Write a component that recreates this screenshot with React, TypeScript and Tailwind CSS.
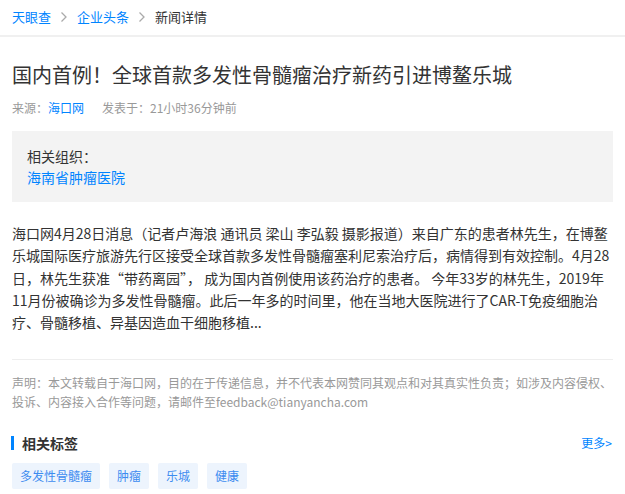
import React from "react";

const Chevron = () => (
  <svg width="8" height="12" viewBox="0 0 8 12" className="mx-[9px]" fill="none">
    <polyline points="1.5,1.5 6,6 1.5,10.5" stroke="#aaaaaa" strokeWidth="1.3" />
  </svg>
);

export default function App() {
  const font = { fontFamily: '"Noto Sans CJK SC", "Liberation Sans", sans-serif' };
  return (
    <div className="w-[625px] h-[494px] bg-white overflow-hidden text-[#333]" style={font}>
      <div className="h-[37px] border-b-2 border-[#f0f0f0] flex items-center px-3 text-[13px] leading-[18px] pb-[1px]">
        <span className="text-[#0084ff]">天眼查</span>
        <Chevron />
        <span className="text-[#0084ff]">企业头条</span>
        <Chevron />
        <span className="text-[#333]">新闻详情</span>
      </div>
      <div className="px-3">
        <h1 className="mt-[24px] text-[20px] leading-[28px] text-[#333]">
          国内首例！全球首款多发性骨髓瘤治疗新药引进博鳌乐城
        </h1>
        <div className="mt-[10px] text-[12px] leading-[18px] text-[#999] flex">
          <span>来源：</span>
          <span className="text-[#0084ff]">海口网</span>
          <span className="ml-[18px]">发表于：21小时36分钟前</span>
        </div>
        <div className="mt-[14px] bg-[#f3f3f3] h-[71px] px-[15px] pt-[15px] text-[14px] leading-[21px]">
          <div className="text-[#333]">相关组织：</div>
          <div className="text-[#0084ff]">海南省肿瘤医院</div>
        </div>
        <p className="mt-[20px] text-[14px] leading-[22.3px] text-[#333] whitespace-nowrap">
          海口网4月28日消息（记者卢海浪 通讯员 梁山 李弘毅 摄影报道）来自广东的患者林先生，在博鳌
          <br />
          乐城国际医疗旅游先行区接受全球首款多发性骨髓瘤塞利尼索治疗后，病情得到有效控制。4月28
          <br />
          日，林先生获准“带药离园”， 成为国内首例使用该药治疗的患者。 今年33岁的林先生，2019年
          <br />
          11月份被确诊为多发性骨髓瘤。此后一年多的时间里，他在当地大医院进行了CAR-T免疫细胞治
          <br />
          疗、骨髓移植、异基因造血干细胞移植...
        </p>
        <div className="mt-[26px] border-t border-[#eeeeee]" />
        <p className="mt-[13px] text-[12px] leading-[19px] text-[#999]">
          声明：本文转载自于海口网，目的在于传递信息，并不代表本网赞同其观点和对其真实性负责；如涉及内容侵权、投诉、内容接入合作等问题，请邮件至feedback@tianyancha.com
        </p>
        <div className="mt-[22px] flex items-center justify-between">
          <div className="flex items-center">
            <div className="w-[3px] h-[14px] bg-[#0084ff] ml-[-1px]" />
            <span className="ml-[8px] text-[14px] leading-[20px] font-bold text-[#333]">相关标签</span>
          </div>
          <span className="text-[12px] text-[#0084ff] mr-[1px]">更多&gt;</span>
        </div>
        <div className="mt-[10px] flex gap-[9px] text-[12px]">
          {["多发性骨髓瘤", "肿瘤", "乐城", "健康"].map((t) => (
            <span key={t} className="h-[26px] px-[8px] flex items-center bg-[#edf4fd] text-[#3d8cf0] rounded-[2px]">
              {t}
            </span>
          ))}
        </div>
      </div>
    </div>
  );
}
